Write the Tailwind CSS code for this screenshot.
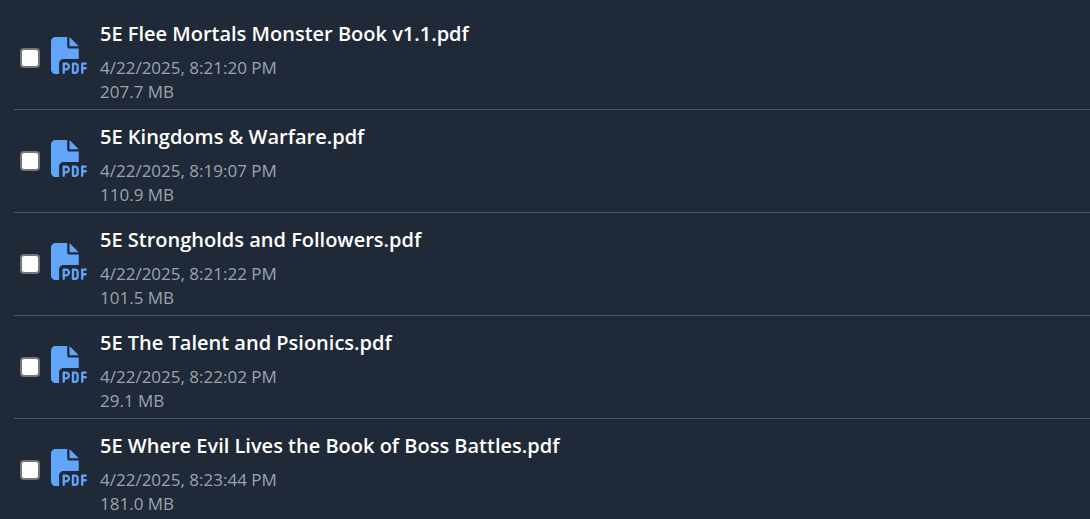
<!DOCTYPE html>
<html lang="en">
<head>
  <meta charset="UTF-8" />
  <meta name="viewport" content="width=device-width, initial-scale=1.0" />
  <title>Files</title>
  <script src="https://cdn.jsdelivr.net/npm/@tailwindcss/browser@4"></script>
</head>
<body class="bg-[#1f2937] text-white min-h-screen overflow-x-hidden font-['Open_Sans','Noto_Sans',sans-serif]">
  <!-- icon shared by every row -->
  <svg class="hidden" aria-hidden="true">
    <symbol id="icon-pdf" viewBox="0 0 512 512">
      <path d="M0 64C0 28.7 28.7 0 64 0L224 0l0 128c0 17.7 14.3 32 32 32l128 0 0 144-208 0c-35.3 0-64 28.7-64 64l0 144-48 0c-35.3 0-64-28.7-64-64L0 64zm384 64l-128 0L256 0 384 128zM176 352l32 0c30.9 0 56 25.1 56 56s-25.1 56-56 56l-16 0 0 32c0 8.8-7.2 16-16 16s-16-7.2-16-16l0-48 0-80c0-8.8 7.2-16 16-16zm32 80c13.3 0 24-10.7 24-24s-10.7-24-24-24l-16 0 0 48 16 0zm96-80l32 0c26.5 0 48 21.5 48 48l0 64c0 26.5-21.5 48-48 48l-32 0c-8.8 0-16-7.2-16-16l0-128c0-8.8 7.2-16 16-16zm32 128c8.8 0 16-7.2 16-16l0-64c0-8.8-7.2-16-16-16l-16 0 0 96 16 0zm80-112c0-8.8 7.2-16 16-16l48 0c8.8 0 16 7.2 16 16s-7.2 16-16 16l-32 0 0 32 32 0c8.8 0 16 7.2 16 16s-7.2 16-16 16l-32 0 0 48c0 8.8-7.2 16-16 16s-16-7.2-16-16l0-64 0-64z" />
    </symbol>
  </svg>

  <ul id="file-list" class="pl-3.5 pt-[7px]"></ul>

  <script>
    const files = [
      { name: '5E Flee Mortals Monster Book v1.1.pdf', date: '4/22/2025, 8:21:20 PM', size: '207.7 MB' },
      { name: '5E Kingdoms & Warfare.pdf', date: '4/22/2025, 8:19:07 PM', size: '110.9 MB' },
      { name: '5E Strongholds and Followers.pdf', date: '4/22/2025, 8:21:22 PM', size: '101.5 MB' },
      { name: '5E The Talent and Psionics.pdf', date: '4/22/2025, 8:22:02 PM', size: '29.1 MB' },
      { name: '5E Where Evil Lives the Book of Boss Battles.pdf', date: '4/22/2025, 8:23:44 PM', size: '181.0 MB' },
    ];

    const list = document.getElementById('file-list');

    files.forEach(({ name, date, size }, index) => {
      const row = document.createElement('li');
      row.className = 'flex items-center border-b border-[#4b5563] last:border-b-0 pl-1.5';
      row.innerHTML = `
        <input type="checkbox" id="file-${index}" class="appearance-none size-5 shrink-0 rounded-[4px] border-2 border-[#767676] bg-white checked:bg-blue-400">
        <svg class="size-[37px] shrink-0 ml-[11px] mb-[5px] text-[#60a5fa]" fill="currentColor" aria-hidden="true"><use href="#icon-pdf"></use></svg>
        <label for="file-${index}" class="ml-3 min-w-0 flex-1 pt-[9px] pb-[5px]">
          <span class="block truncate text-[20px] leading-9 font-semibold"></span>
          <span class="block mt-1 text-[17px] leading-6 text-[#9ca3af]">${date}</span>
          <span class="block text-[17px] leading-6 text-[#9ca3af]">${size}</span>
        </label>
      `;
      row.querySelector('label span').textContent = name;
      list.appendChild(row);
    });
  </script>
</body>
</html>
